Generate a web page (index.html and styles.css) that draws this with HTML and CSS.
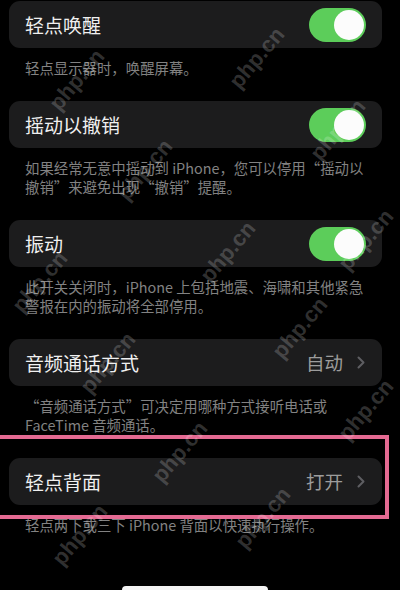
FILE: index.html
```html
<!DOCTYPE html>
<html lang="zh-CN">
<head>
<meta charset="utf-8">
<title>触控</title>
<link rel="stylesheet" href="styles.css">
</head>
<body>
<main class="settings">
  <section class="group">
    <div class="cell">
      <span class="cell-title">轻点唤醒</span>
      <span class="switch is-on"><span class="knob"></span></span>
    </div>
    <p class="footnote">轻点显示器时，唤醒屏幕。</p>
  </section>

  <section class="group">
    <div class="cell">
      <span class="cell-title">摇动以撤销</span>
      <span class="switch is-on"><span class="knob"></span></span>
    </div>
    <p class="footnote">如果经常无意中摇动到 iPhone，您可以停用“摇动以<br>撤销”来避免出现“撤销”提醒。</p>
  </section>

  <section class="group">
    <div class="cell">
      <span class="cell-title">振动</span>
      <span class="switch is-on"><span class="knob"></span></span>
    </div>
    <p class="footnote">此开关关闭时，iPhone 上包括地震、海啸和其他紧急<br>警报在内的振动将全部停用。</p>
  </section>

  <section class="group">
    <div class="cell">
      <span class="cell-title">音频通话方式</span>
      <span class="cell-value">自动</span>
      <svg class="chevron" viewBox="0 0 8 13" width="8" height="13"><path d="M1.5 1.5 L6.5 6.5 L1.5 11.5" fill="none" stroke="currentColor" stroke-width="2" stroke-linecap="round" stroke-linejoin="round"/></svg>
    </div>
    <p class="footnote">“音频通话方式”可决定用哪种方式接听电话或<br>FaceTime 音频通话。</p>
  </section>

  <section class="group">
    <div class="cell">
      <span class="cell-title">轻点背面</span>
      <span class="cell-value">打开</span>
      <svg class="chevron" viewBox="0 0 8 13" width="8" height="13"><path d="M1.5 1.5 L6.5 6.5 L1.5 11.5" fill="none" stroke="currentColor" stroke-width="2" stroke-linecap="round" stroke-linejoin="round"/></svg>
    </div>
    <p class="footnote">轻点两下或三下 iPhone 背面以快速执行操作。</p>
  </section>
</main>

<div class="highlight"></div>
<div class="home-bar"></div>

<div class="watermarks" aria-hidden="true">
  <span class="wm wm-1">php.cn</span>
  <span class="wm wm-2">php.cn</span>
  <span class="wm wm-3">php.cn</span>
  <span class="wm wm-4">php.cn</span>
  <span class="wm wm-5">php.cn</span>
  <span class="wm wm-6">php.cn</span>
  <span class="wm wm-7">php.cn</span>
  <span class="wm wm-8">php.cn</span>
  <span class="wm wm-9">php.cn</span>
  <span class="wm wm-10">php.cn</span>
  <span class="wm wm-11">php.cn</span>
  <span class="wm wm-12">php.cn</span>
  <span class="wm wm-13">php.cn</span>
</div>
</body>
</html>
```

FILE: styles.css
```css
html, body {
  margin: 0;
  padding: 0;
  background: #000;
}

body {
  width: 400px;
  height: 590px;
  overflow: hidden;
  position: relative;
  font-family: "Noto Sans CJK SC", "Noto Sans", sans-serif;
  color: #ececec;
}

.settings {
  display: flex;
  flex-direction: column;
  gap: 24px;
  padding: 1px 0 0 9px;
}

.group {
  width: 373px;
}

.cell {
  height: 47px;
  box-sizing: border-box;
  display: flex;
  align-items: center;
  gap: 6px;
  padding: 0 16px;
  background: #1c1c1d;
  border-radius: 11px;
}

.cell-title {
  flex: 1;
  font-size: 19px;
  line-height: 1;
  color: #f0f0f0;
}

.cell-value {
  font-size: 18.5px;
  line-height: 1;
  color: #9c9c9c;
  margin-right: 8px;
}

.chevron {
  color: #5e5e62;
  margin-right: 1px;
}

.switch {
  width: 57px;
  height: 34px;
  border-radius: 17px;
  background: #5ccd5a;
  display: flex;
  align-items: center;
  justify-content: flex-end;
  padding: 0 2px;
  box-sizing: border-box;
}

.knob {
  width: 30px;
  height: 30px;
  border-radius: 50%;
  background: #fcfcfc;
}

.footnote {
  margin: 0;
  padding: 10px 16px 0;
  font-size: 14.4px;
  line-height: 19px;
  color: #828282;
  white-space: nowrap;
}

/* pink annotation frame */
.highlight {
  position: absolute;
  left: -4px;
  top: 435px;
  width: 393px;
  height: 84px;
  box-sizing: border-box;
  border: 4px solid #e46a92;
}

.home-bar {
  position: absolute;
  left: 122px;
  top: 586px;
  width: 146px;
  height: 8px;
  border-radius: 4px;
  background: #f4f4f4;
}

.watermarks {
  position: absolute;
  inset: 0;
  pointer-events: none;
}

.wm {
  position: absolute;
  transform: translate(-50%, -50%) rotate(-50deg);
  font-family: "Liberation Sans", Arial, sans-serif;
  font-weight: bold;
  font-size: 22px;
  color: rgba(255, 255, 255, 0.2);
  white-space: nowrap;
}

.wm-1 { left: 257px; top: 58px; }
.wm-2 { left: 77px; top: 80px; }
.wm-3 { left: 338px; top: 130px; }
.wm-4 { left: 145px; top: 170px; }
.wm-5 { left: 228px; top: 252px; }
.wm-6 { left: 40px; top: 282px; }
.wm-7 { left: 366px; top: 240px; }
.wm-8 { left: 300px; top: 328px; }
.wm-9 { left: 108px; top: 363px; }
.wm-10 { left: 366px; top: 410px; }
.wm-11 { left: 180px; top: 452px; }
.wm-12 { left: 263px; top: 518px; }
.wm-13 { left: 80px; top: 535px; }
```
